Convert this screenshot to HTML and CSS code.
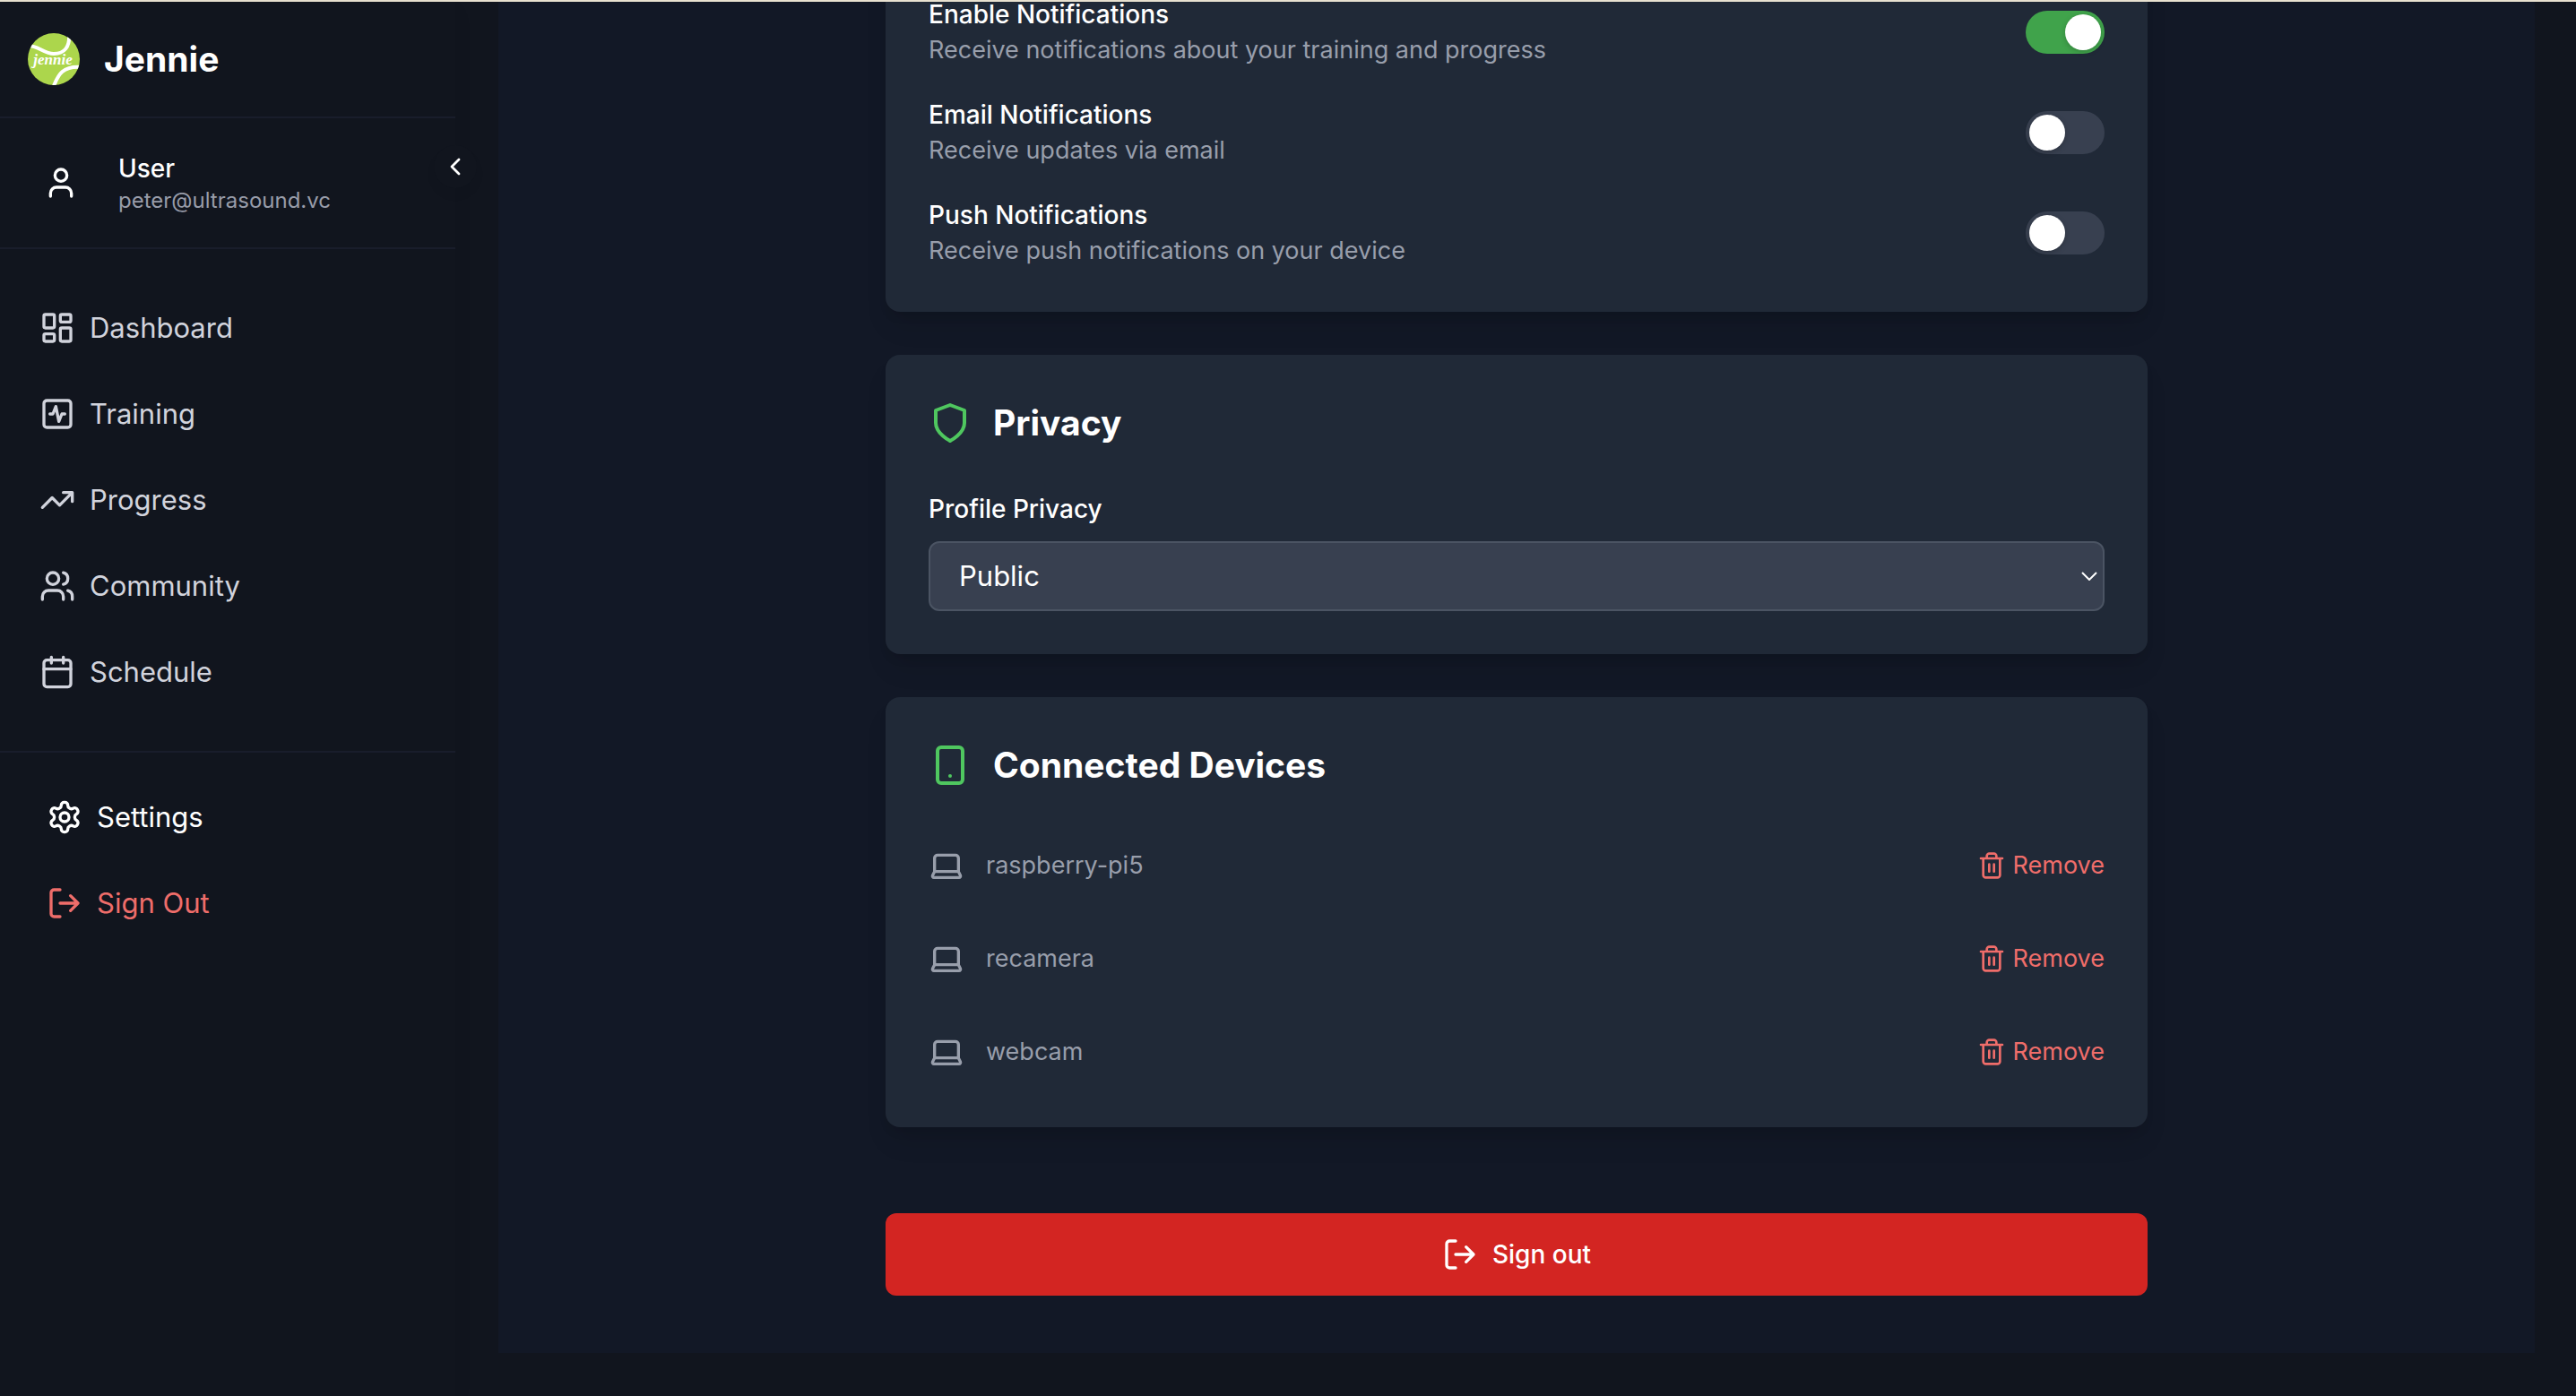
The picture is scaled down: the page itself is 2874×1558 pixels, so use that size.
FILE: index.html
```html
<!DOCTYPE html>
<html lang="en">
<head>
<meta charset="utf-8">
<meta name="viewport" content="width=device-width, initial-scale=1">
<title>Jennie</title>
<link rel="stylesheet" href="styles.css">
</head>
<body>
<svg class="sprite" aria-hidden="true">
  <symbol id="laptop" viewBox="0 0 24 24"><path d="M20 16V7a2 2 0 0 0-2-2H6a2 2 0 0 0-2 2v9m16 0H4m16 0 1.28 2.55a1 1 0 0 1-.9 1.45H3.62a1 1 0 0 1-.9-1.45L4 16"/></symbol>
  <symbol id="trash" viewBox="0 0 24 24"><path d="M3 6h18M19 6v14c0 1-1 2-2 2H7c-1 0-2-1-2-2V6M8 6V4c0-1 1-2 2-2h4c1 0 2 1 2 2v2M10 11v6M14 11v6"/></symbol>
  <symbol id="log-out" viewBox="0 0 24 24"><path d="M9 21H5a2 2 0 0 1-2-2V5a2 2 0 0 1 2-2h4M16 17l5-5-5-5M21 12H9"/></symbol>
</svg>
<div class="app">
  <aside class="sidebar">
    <header class="brand">
      <svg class="logo" viewBox="0 0 60 60" role="img" aria-label="Jennie logo">
        <defs><clipPath id="ball"><circle cx="30" cy="30" r="29"/></clipPath></defs>
        <g clip-path="url(#ball)">
          <rect width="60" height="60" fill="#acd64c"/>
          <path d="M1 15c10-1 18 9 29 9 12 0 18-8 17-21M29 62c5-10 7-25 32-23" fill="none" stroke="#fff" stroke-width="4"/>
        </g>
        <text x="29" y="36" class="logo-text">jennie</text>
      </svg>
      <span class="brand-name">Jennie</span>
    </header>
    <section class="account">
      <svg class="icon" viewBox="0 0 24 24"><path d="M19 21v-2a4 4 0 0 0-4-4H9a4 4 0 0 0-4 4v2"/><circle cx="12" cy="7" r="4"/></svg>
      <div class="account-text">
        <span class="account-name">User</span>
        <span class="account-mail">peter@ultrasound.vc</span>
      </div>
      <button class="collapse" type="button" aria-label="Collapse sidebar"><svg class="icon icon-small" viewBox="0 0 24 24"><path d="m15 18-6-6 6-6"/></svg></button>
    </section>
    <nav class="menu">
      <a class="menu-item" href="#dashboard"><svg class="icon" viewBox="0 0 24 24"><rect x="3" y="3" width="7" height="9" rx="1"/><rect x="14" y="3" width="7" height="5" rx="1"/><rect x="14" y="12" width="7" height="9" rx="1"/><rect x="3" y="16" width="7" height="5" rx="1"/></svg>Dashboard</a>
      <a class="menu-item" href="#training"><svg class="icon" viewBox="0 0 24 24"><rect x="3" y="3" width="18" height="18" rx="2"/><path d="M17 12h-2l-2 5-2-10-2 5H7"/></svg>Training</a>
      <a class="menu-item" href="#progress"><svg class="icon" viewBox="0 0 24 24"><path d="m22 7-8.5 8.5-5-5L2 17M16 7h6v6"/></svg>Progress</a>
      <a class="menu-item" href="#community"><svg class="icon" viewBox="0 0 24 24"><path d="M16 21v-2a4 4 0 0 0-4-4H6a4 4 0 0 0-4 4v2M22 21v-2a4 4 0 0 0-3-3.87M16 3.13a4 4 0 0 1 0 7.75"/><circle cx="9" cy="7" r="4"/></svg>Community</a>
      <a class="menu-item" href="#schedule"><svg class="icon" viewBox="0 0 24 24"><path d="M8 2v4M16 2v4M3 10h18"/><rect x="3" y="4" width="18" height="18" rx="2"/></svg>Schedule</a>
    </nav>
    <div class="menu menu-footer">
      <a class="menu-item menu-current" href="#settings"><svg class="icon" viewBox="0 0 24 24"><path d="M12.22 2h-.44a2 2 0 0 0-2 2v.18a2 2 0 0 1-1 1.73l-.43.25a2 2 0 0 1-2 0l-.15-.08a2 2 0 0 0-2.73.73l-.22.38a2 2 0 0 0 .73 2.73l.15.1a2 2 0 0 1 1 1.72v.51a2 2 0 0 1-1 1.74l-.15.09a2 2 0 0 0-.73 2.73l.22.38a2 2 0 0 0 2.73.73l.15-.08a2 2 0 0 1 2 0l.43.25a2 2 0 0 1 1 1.73V20a2 2 0 0 0 2 2h.44a2 2 0 0 0 2-2v-.18a2 2 0 0 1 1-1.73l.43-.25a2 2 0 0 1 2 0l.15.08a2 2 0 0 0 2.73-.73l.22-.39a2 2 0 0 0-.73-2.73l-.15-.08a2 2 0 0 1-1-1.74v-.5a2 2 0 0 1 1-1.74l.15-.09a2 2 0 0 0 .73-2.73l-.22-.38a2 2 0 0 0-2.73-.73l-.15.08a2 2 0 0 1-2 0l-.43-.25a2 2 0 0 1-1-1.73V4a2 2 0 0 0-2-2z"/><circle cx="12" cy="12" r="3"/></svg>Settings</a>
      <button class="menu-item menu-danger" type="button"><svg class="icon"><use href="#log-out"/></svg>Sign Out</button>
    </div>
  </aside>
  <main class="content">
    <div class="panel">
      <div class="column">
        <section class="card settings">
          <div class="setting">
            <label for="enable"><span class="setting-name">Enable Notifications</span><span class="muted">Receive notifications about your training and progress</span></label>
            <input class="switch" type="checkbox" id="enable" checked>
          </div>
          <div class="setting">
            <label for="email"><span class="setting-name">Email Notifications</span><span class="muted">Receive updates via email</span></label>
            <input class="switch" type="checkbox" id="email">
          </div>
          <div class="setting">
            <label for="push"><span class="setting-name">Push Notifications</span><span class="muted">Receive push notifications on your device</span></label>
            <input class="switch" type="checkbox" id="push">
          </div>
        </section>
        <section class="card">
          <h2 class="card-title"><svg class="icon icon-large" viewBox="0 0 24 24"><path d="M12 22s8-4 8-10V5l-8-3-8 3v7c0 6 8 10 8 10"/></svg>Privacy</h2>
          <div class="field">
            <label class="setting-name" for="privacy">Profile Privacy</label>
            <div class="select-box">
              <select id="privacy"><option>Public</option><option>Private</option></select>
              <svg class="select-arrow" viewBox="0 0 18 10"><path d="m1 1 8 8 8-8"/></svg>
            </div>
          </div>
        </section>
        <section class="card">
          <h2 class="card-title"><svg class="icon icon-large" viewBox="0 0 24 24"><rect x="5" y="2" width="14" height="20" rx="2"/><path d="M12 18h.01"/></svg>Connected Devices</h2>
          <ul class="devices">
            <li class="device"><span class="device-name"><svg class="icon"><use href="#laptop"/></svg>raspberry-pi5</span><button class="remove" type="button"><svg class="icon icon-small"><use href="#trash"/></svg>Remove</button></li>
            <li class="device"><span class="device-name"><svg class="icon"><use href="#laptop"/></svg>recamera</span><button class="remove" type="button"><svg class="icon icon-small"><use href="#trash"/></svg>Remove</button></li>
            <li class="device"><span class="device-name"><svg class="icon"><use href="#laptop"/></svg>webcam</span><button class="remove" type="button"><svg class="icon icon-small"><use href="#trash"/></svg>Remove</button></li>
          </ul>
        </section>
        <button class="sign-out" type="button"><svg class="icon"><use href="#log-out"/></svg>Sign out</button>
      </div>
    </div>
  </main>
</div>
</body>
</html>
```
FILE: styles.css
```css
* {
  box-sizing: border-box;
}

body {
  margin: 0;
  background: #11151e;
  color: #fff;
  font-family: Inter, "Liberation Sans", sans-serif;
  font-size: 28px;
  line-height: 40px;
}

button,
select {
  font: inherit;
  color: inherit;
  background: none;
  border: 0;
  padding: 0;
  cursor: pointer;
}

.sprite {
  display: none;
}

.app {
  display: flex;
  height: 100vh;
  border-top: 2px solid #e8e1d0;
}

.icon {
  flex: none;
  width: 40px;
  height: 40px;
  fill: none;
  stroke: currentColor;
  stroke-width: 2;
  stroke-linecap: round;
  stroke-linejoin: round;
}

.icon-small {
  width: 32px;
  height: 32px;
}

.icon-large {
  width: 48px;
  height: 48px;
}

/* Sidebar */

.sidebar {
  flex: none;
  width: 508px;
  box-shadow: 0 8px 24px rgba(0, 0, 0, 0.04);
}

.brand {
  display: flex;
  align-items: center;
  gap: 26px;
  height: 130px;
  border-bottom: 2px solid #191d2b;
  padding-left: 30px;
}

.logo {
  width: 60px;
  height: 60px;
}

.logo-text {
  fill: #fff;
  font: italic bold 17px "Liberation Serif", serif;
  text-anchor: middle;
}

.brand-name {
  font-size: 39px;
  font-weight: 700;
}

.account {
  position: relative;
  display: flex;
  align-items: center;
  gap: 44px;
  height: 146px;
  border-bottom: 2px solid #191d2b;
  padding-left: 48px;
}

.account-text {
  display: flex;
  flex-direction: column;
}

.account-name {
  font-weight: 500;
}

.account-mail {
  color: #989ca9;
  font-size: 24px;
  line-height: 32px;
}

.collapse {
  position: absolute;
  top: 30px;
  right: -24px;
  display: grid;
  place-items: center;
  width: 48px;
  height: 48px;
  border-radius: 50%;
  background: #11151e;
  box-shadow: 0 8px 12px rgba(0, 0, 0, 0.04);
}

.menu {
  display: flex;
  flex-direction: column;
  gap: 16px;
  padding: 48px 16px;
}

.menu-item {
  display: flex;
  align-items: center;
  gap: 16px;
  height: 80px;
  padding: 0 28px;
  color: #d1d3dc;
  font-size: 31px;
  text-decoration: none;
}

.menu-footer {
  border-top: 2px solid #191d2b;
  padding: 32px 24px;
}

.menu-footer .menu-current {
  color: #fff;
}

.menu-footer .menu-danger {
  color: #ef6d6a;
}

/* Content */

.content {
  flex: 1;
  min-width: 0;
  padding: 0 46px 48px 48px;
}

.panel {
  display: flex;
  flex-direction: column;
  justify-content: flex-end;
  height: 100%;
  overflow: hidden;
  background: #121826;
  padding: 0 64px 64px;
}

.column {
  display: flex;
  flex-direction: column;
  gap: 48px;
  width: 100%;
  max-width: 1408px;
  margin: 0 auto;
}

.card {
  display: flex;
  flex-direction: column;
  gap: 48px;
  border-radius: 16px;
  background: #202937;
  box-shadow: 0 20px 30px -6px rgba(0, 0, 0, 0.1), 0 8px 12px -4px rgba(0, 0, 0, 0.1);
  padding: 48px;
}

.settings {
  gap: 32px;
}

.setting {
  display: flex;
  align-items: center;
  justify-content: space-between;
}

.setting span {
  display: block;
}

.setting-name {
  font-weight: 500;
}

.muted {
  color: #989eab;
  font-size: 27px;
}

.switch {
  appearance: none;
  width: 88px;
  height: 48px;
  margin: 0;
  border-radius: 24px;
  background: #384050;
  padding: 4px;
}

.switch::before {
  content: "";
  display: block;
  width: 40px;
  height: 40px;
  border-radius: 50%;
  background: #fff;
  box-shadow: 0 2px 6px rgba(0, 0, 0, 0.2);
}

.switch:checked {
  background: #40a34b;
}

.switch:checked::before {
  margin-left: auto;
}

.card-title {
  display: flex;
  align-items: center;
  gap: 24px;
  margin: 0;
  font-size: 39px;
  font-weight: 700;
  line-height: 56px;
}

.card-title .icon {
  color: #4fc75f;
}

.field {
  display: flex;
  flex-direction: column;
  gap: 16px;
}

.select-box {
  display: grid;
  align-items: center;
}

.select-box > * {
  grid-area: 1 / 1;
}

.select-box select {
  appearance: none;
  height: 78px;
  border: 2px solid #4b5463;
  border-radius: 12px;
  background: #384050;
  padding: 0 32px;
  font-size: 31px;
}

.select-arrow {
  justify-self: end;
  width: 18px;
  height: 10px;
  margin-right: 8px;
  fill: none;
  stroke: #fff;
  stroke-width: 2;
  pointer-events: none;
}

.devices {
  display: flex;
  flex-direction: column;
  gap: 32px;
  margin: 0;
  padding: 0;
  list-style: none;
}

.device {
  display: flex;
  align-items: center;
  justify-content: space-between;
  height: 72px;
  font-size: 27px;
}

.device-name {
  display: flex;
  align-items: center;
  gap: 24px;
  color: #989eab;
}

.remove {
  display: flex;
  align-items: center;
  gap: 8px;
  color: #ef6d6a;
}

.sign-out {
  display: flex;
  align-items: center;
  justify-content: center;
  gap: 16px;
  height: 92px;
  margin-top: 48px;
  border-radius: 12px;
  background: #d32522;
  font-weight: 500;
}
```
